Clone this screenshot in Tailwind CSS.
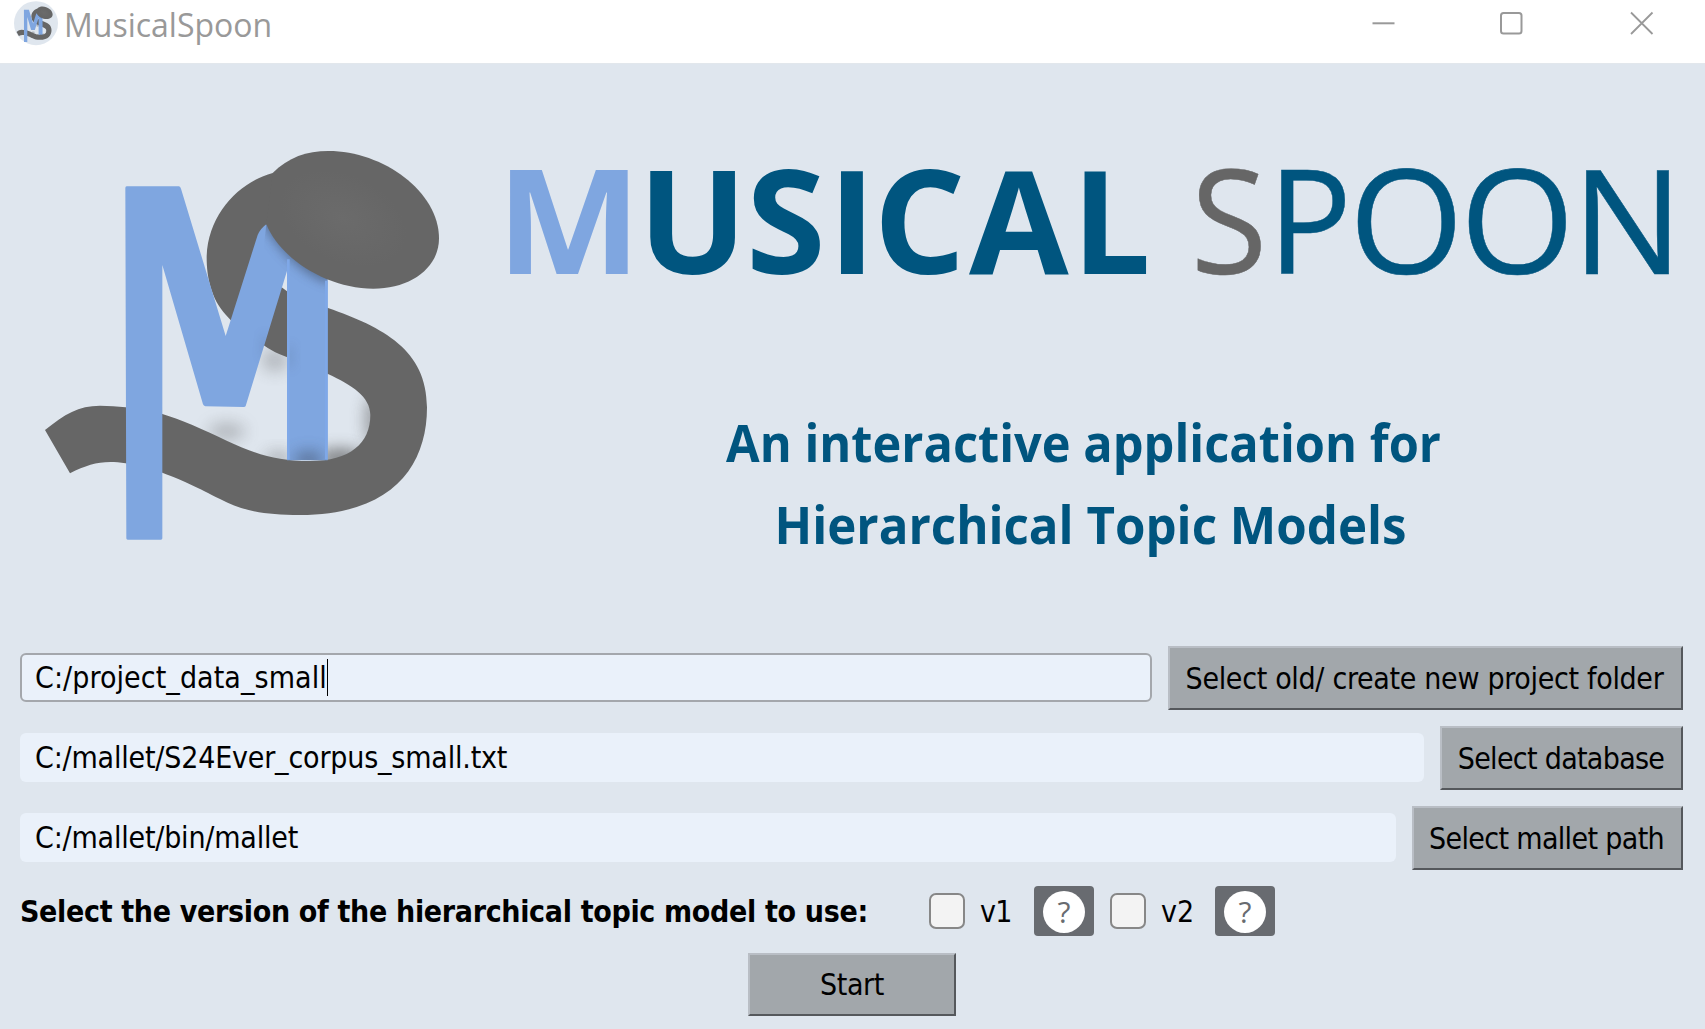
<!DOCTYPE html>
<html lang="en">
<head>
<meta charset="utf-8">
<title>MusicalSpoon</title>
<script src="https://cdn.jsdelivr.net/npm/@tailwindcss/browser@4"></script>
</head>
<body class="w-[1705px] h-[1029px] overflow-hidden flex flex-col bg-[#dfe6ee] text-black text-[30px] leading-[40px] font-['DejaVu_Sans_Condensed','DejaVu_Sans',sans-serif]">

<header class="h-16 shrink-0 bg-white flex items-start border-b border-[#e2e7ec]">
  <svg class="ml-[14px] mt-[1px] shrink-0" width="44" height="45" viewBox="0 0 44 45">
    <circle cx="22" cy="22.2" r="22" fill="#dfe6ee"/>
    <use href="#logo" transform="translate(1.2 3.6) scale(.0305)"/>
  </svg>
  <h1 class="ml-[6px] mt-[3px] text-[32px] leading-[44px] text-[#999] font-['Open_Sans',sans-serif]">MusicalSpoon</h1>
  <div class="ml-auto mr-[51px] mt-[11px] flex text-[#999]">
    <svg class="mr-[103px]" width="25" height="25" viewBox="0 0 25 25" fill="none" stroke="currentColor" stroke-width="2"><path d="M1.5 12.3H23.5"/></svg>
    <svg class="mr-[105px]" width="25" height="25" viewBox="0 0 25 25" fill="none" stroke="currentColor" stroke-width="2"><rect x="2" y="2" width="20.5" height="20.5" rx="2.5"/></svg>
    <svg width="25" height="25" viewBox="0 0 25 25" fill="none" stroke="currentColor" stroke-width="1.8"><path d="M2 1.5L23.5 23M23.5 1.5L2 23"/></svg>
  </div>
</header>

<section class="h-[582px] shrink-0 flex">
  <svg class="ml-[30px] mt-[66px] shrink-0" width="430" height="430" viewBox="0 0 1290 1290">
    <defs>
      <filter id="b" x="-150%" y="-150%" width="400%" height="400%"><feGaussianBlur stdDeviation="24"/></filter>
      <filter id="b2" x="-150%" y="-50%" width="400%" height="200%"><feGaussianBlur stdDeviation="16"/></filter>
      <radialGradient id="g"><stop offset="0" stop-color="#6b6b6b"/><stop offset="1" stop-color="#666"/></radialGradient>
      <clipPath id="m"><path d="M645 831L709 283L893 440V991H771V423Z"/></clipPath>
      <clipPath id="in"><path d="M700 600L770 660L894 720C975 760 1030 800 1030 855C1030 940 970 1000 840 1000C730 1000 680 985 600 950L450 900V780L645 831Z"/></clipPath>
      <g id="logo">
        <g clip-path="url(#in)" fill="#555">
          <ellipse cx="735" cy="690" rx="40" ry="35" opacity=".32" filter="url(#b)"/>
          <ellipse cx="590" cy="905" rx="55" ry="25" opacity=".35" filter="url(#b)"/>
          <ellipse cx="930" cy="985" rx="70" ry="28" opacity=".75" filter="url(#b)"/>
          <ellipse cx="1030" cy="870" rx="22" ry="75" opacity=".6" filter="url(#b)"/>
          <ellipse cx="745" cy="985" rx="40" ry="14" opacity=".6" filter="url(#b)"/>
        </g>
        <path fill="#666" d="M45 900C105 852 145 827 210 827Q250 827 287 832C330 836 365 842 397 852C450 868 520 898 590 932C680 973 740 993 840 993C960 993 1021 940 1021 855C1021 800 965 765 894 732L770 681Q730 667 700 645C650 615 575 560 550 495C532 450 530 410 530 380C534 250 630 155 728 129L900 300L709 290L755 472L771 484L894 534C1060 592 1191 660 1191 832C1191 1010 1085 1155 810 1155C700 1155 640 1143 570 1107C500 1071 470 1056 397 1028L287 1000C220 990 180 1000 120 1030Z"/>
        <path fill="#7fa6e0" d="M290 169H447Q451 170 453 176L587 618L683 315Q692 295 709 283L893 440V991H771V423L647 828Q646 831 641 831L526 829Q521 828 519 823L397 405V1225Q397 1229 393 1229H293Q289 1229 289 1225L286 174Q286 170 290 169Z"/>
        <g clip-path="url(#m)" fill="#4a5a75">
          <path d="M700 270C750 370 840 440 900 455V420L720 240Z" opacity=".7" stroke="#4a5a75" stroke-width="10" filter="url(#b2)"/>
          <ellipse cx="836" cy="990" rx="44" ry="24" opacity=".75" filter="url(#b)"/>
          <ellipse cx="780" cy="680" rx="8" ry="40" opacity=".25" filter="url(#b2)"/>
          <ellipse cx="705" cy="650" rx="10" ry="40" opacity=".2" filter="url(#b2)"/>
        </g>
        <path fill="none" stroke="#7fa8e8" stroke-width="8" d="M775 388V988M889 452V988"/>
        <path fill="#666" d="M728 129C775 82 830 63 895 63C1060 63 1227 185 1227 325C1227 415 1140 476 1030 476C890 476 750 385 709 283Z"/>
        <ellipse cx="940" cy="265" rx="200" ry="130" transform="rotate(25 940 265)" fill="url(#g)"/>
      </g>
    </defs>
    <use href="#logo"/>
  </svg>
  <svg class="shrink-0 font-['Open_Sans',sans-serif]" width="1245" height="582" viewBox="460 64 1245 582" fill="#00557f">
    <g class="text-[144.5px] font-bold">
      <text transform="translate(496.2 274.3) scale(1.066 1)" fill="#7fa6e0">M</text>
      <text x="638 746 828 873.5 969" y="274.3">USICA</text>
      <text transform="translate(1072 274.3) scale(.965 1)">L</text>
    </g>
    <g class="text-[144.5px] font-normal" stroke="#00557f" stroke-width=".5">
      <text transform="translate(1190.8 274.3) scale(.965 1)" fill="#666" stroke="#666">S</text>
      <text transform="translate(1267.8 274.3) scale(.97 1)">P</text>
      <text transform="translate(1349 274.3) scale(1.02 1)">O</text>
      <text transform="translate(1460 274.3) scale(1.02 1)">O</text>
      <text transform="translate(1572 274.3) scale(1.02 1)">N</text>
    </g>
    <g class="text-[52px] font-bold">
      <text x="726" y="462" textLength="715" lengthAdjust="spacingAndGlyphs">An interactive application for</text>
      <text x="774.5" y="544.3" textLength="632" lengthAdjust="spacingAndGlyphs">Hierarchical Topic Models</text>
    </g>
  </svg>
</section>

<main class="flex flex-col gap-4 pl-5 pr-[22px] whitespace-nowrap">
  <div class="h-16 flex items-center gap-4">
    <div class="flex-1 h-[49px] mb-px flex items-center rounded-md border-2 border-[#a4a7ac] bg-[#eaf1fa] pl-[13px]"><span class="pt-px tracking-[0.07px]">C:/project_data_small</span><span class="w-px h-[37px] bg-black"></span></div>
    <button class="w-[515px] h-16 border-2 border-t-[#b9bec5] border-l-[#b9bec5] border-r-[#55585c] border-b-[#55585c] bg-[#a2a7ab] pt-px pr-[2px] tracking-[-0.32px]">Select old/ create new project folder</button>
  </div>
  <div class="h-16 flex items-center gap-4">
    <div class="flex-1 h-[49px] mb-px flex items-center rounded-md bg-[#eaf1fa] pl-[15px]"><span class="pt-px tracking-[-0.19px]">C:/mallet/S24Ever_corpus_small.txt</span></div>
    <button class="w-[243px] h-16 border-2 border-t-[#b9bec5] border-l-[#b9bec5] border-r-[#55585c] border-b-[#55585c] bg-[#a2a7ab] pt-px pr-px tracking-[-0.7px]">Select database</button>
  </div>
  <div class="h-16 flex items-center gap-4">
    <div class="flex-1 h-[49px] mb-px flex items-center rounded-md bg-[#eaf1fa] pl-[15px]"><span class="pt-px tracking-[-0.2px]">C:/mallet/bin/mallet</span></div>
    <button class="w-[271px] h-16 border-2 border-t-[#b9bec5] border-l-[#b9bec5] border-r-[#55585c] border-b-[#55585c] bg-[#a2a7ab] pt-px pr-[2px] tracking-[-0.65px]">Select mallet path</button>
  </div>
  <div class="h-[50px] flex items-center">
    <span class="w-[909px] pt-px font-bold tracking-[-0.33px]">Select the version of the hierarchical topic model to use:</span>
    <span class="size-9 mb-px rounded-[7px] border-2 border-[#878787] bg-[#f3f3f3]"></span>
    <span class="ml-[15px] w-[54px] pt-px tracking-[-0.8px]">v1</span>
    <button class="w-[60px] h-[50px] rounded bg-[#686b70] flex items-center justify-center"><span class="size-[42px] mt-px rounded-full bg-white text-[#686b70] text-[30px] leading-[41px] text-center font-['Open_Sans',sans-serif]">?</span></button>
    <span class="ml-4 size-9 mb-px rounded-[7px] border-2 border-[#878787] bg-[#f3f3f3]"></span>
    <span class="ml-[15px] w-[54px] pt-px">v2</span>
    <button class="w-[60px] h-[50px] rounded bg-[#686b70] flex items-center justify-center"><span class="size-[42px] mt-px rounded-full bg-white text-[#686b70] text-[30px] leading-[41px] text-center font-['Open_Sans',sans-serif]">?</span></button>
  </div>
  <button class="ml-[728px] mt-px w-[208px] h-[63px] border-2 border-t-[#b9bec5] border-l-[#b9bec5] border-r-[#55585c] border-b-[#55585c] bg-[#a2a7ab] tracking-[-0.4px]">Start</button>
</main>
</body>
</html>
